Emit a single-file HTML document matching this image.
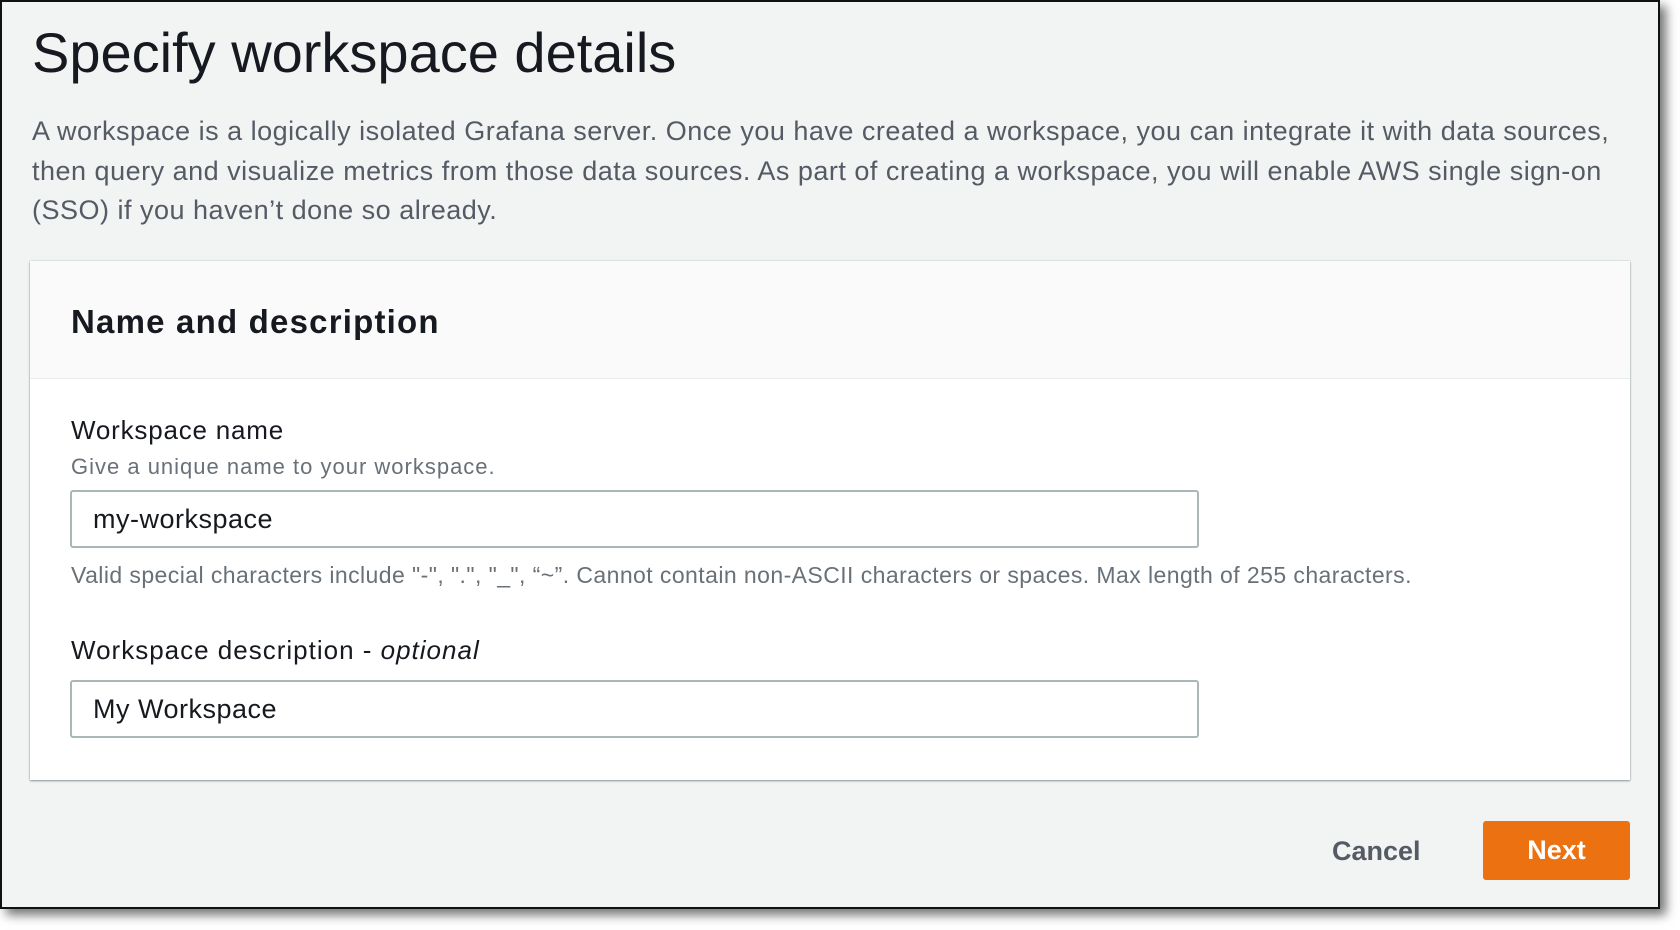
<!DOCTYPE html>
<html><head><style>
*{margin:0;padding:0;box-sizing:border-box}
body{width:1680px;height:930px;background:#fff;font-family:"Liberation Sans",sans-serif;position:relative;overflow:hidden}
.frame{position:absolute;left:0;top:0;width:1660px;height:909px;background:#f2f3f3;border:2px solid #111;box-shadow:6px 6px 10px rgba(0,0,0,.55)}
.a{position:absolute;white-space:nowrap}
.card{position:absolute;left:30px;top:261px;width:1600px;height:519px;background:#fff;box-shadow:0 1px 2px rgba(0,28,36,.4),0 0 1px rgba(0,28,36,.3)}
.hdr{position:absolute;left:0;top:0;width:100%;height:118px;background:#fafafa;border-bottom:1px solid #eaeded}
.inp{position:absolute;left:70px;width:1129px;height:58px;border:2px solid #aab7b8;border-radius:3px;background:#fff;font-size:27px;color:#16191f;padding-left:21px;line-height:54px;letter-spacing:0.5px}
</style></head><body>
<div class="frame">
<div class="a" style="left:30px;top:17px;font-size:56px;color:#16191f;line-height:68px">Specify workspace details</div>
<div class="a" style="left:30px;top:110px;font-size:27px;color:#545b64;line-height:39.7px;letter-spacing:0.5px">A workspace is a logically isolated Grafana server. Once you have created a workspace, you can integrate it with data sources,<br>then query and visualize metrics from those data sources. As part of creating a workspace, you will enable AWS single sign-on<br>(SSO) if you haven’t done so already.</div>
<div class="card" style="left:28px;top:259px">
<div class="hdr"></div>
<div class="a" style="left:41px;top:42px;font-size:33px;font-weight:bold;color:#16191f;letter-spacing:1.2px">Name and description</div>
<div class="a" style="left:41px;top:154px;font-size:26px;color:#16191f;letter-spacing:0.8px">Workspace name</div>
<div class="a" style="left:41px;top:193px;font-size:22px;color:#687078;letter-spacing:1px">Give a unique name to your workspace.</div>
<div class="a" style="left:41px;top:301px;font-size:23px;color:#687078;letter-spacing:0.43px">Valid special characters include "-", ".", "_", “~”. Cannot contain non-ASCII characters or spaces. Max length of 255 characters.</div>
<div class="a" style="left:41px;top:374px;font-size:26px;color:#16191f;letter-spacing:1px">Workspace description - <i>optional</i></div>
</div>
<div class="inp" style="top:488px;left:68px">my-workspace</div>
<div class="inp" style="top:678px;left:68px">My Workspace</div>
<div class="a" style="left:1330px;top:834px;font-size:27px;font-weight:bold;color:#545b64">Cancel</div>
<div class="a" style="left:1481px;top:819px;width:147px;height:59px;background:#ec7211;border-radius:3px;color:#fff;font-size:27px;font-weight:bold;text-align:center;line-height:59px">Next</div>
</div>
</body></html>
